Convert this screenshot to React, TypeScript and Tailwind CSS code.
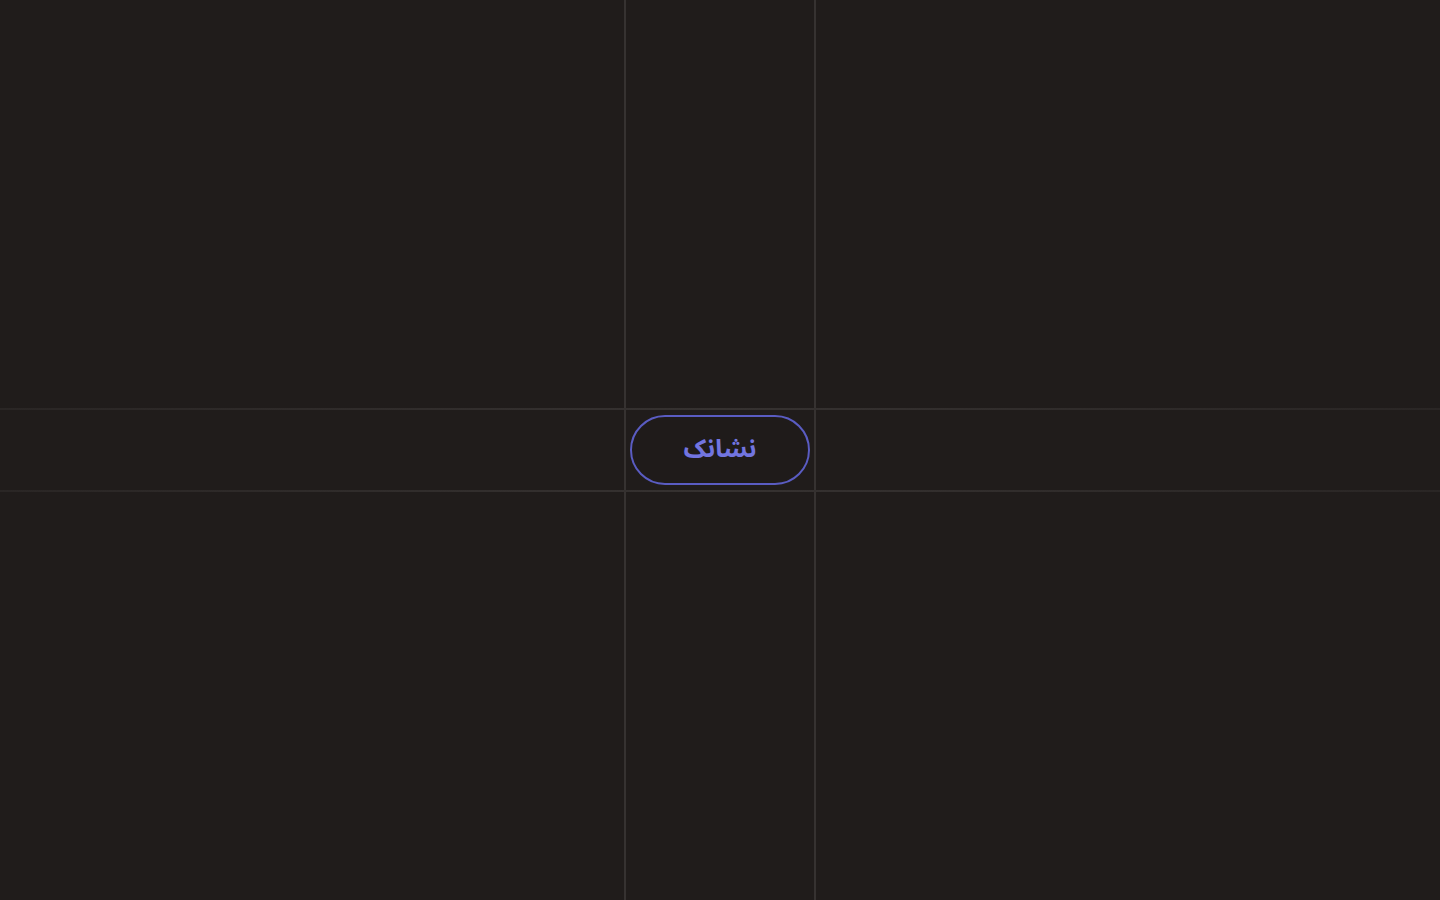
export default function App() {
  return (
    <div className="grid h-[900px] w-full grid-cols-[1fr_2px_auto_2px_1fr] grid-rows-[1fr_2px_auto_2px_1fr] bg-[#201c1b]">
      {/* vertical guide lines */}
      <div className="col-start-2 row-span-5 row-start-1 bg-[#363231]" />
      <div className="col-start-4 row-span-5 row-start-1 bg-[#363231]" />

      {/* horizontal guide lines */}
      <div className="col-span-5 col-start-1 row-start-2 bg-gradient-to-r from-[#2a2625] via-[#363231] to-[#2a2625]" />
      <div className="col-span-5 col-start-1 row-start-4 bg-gradient-to-r from-[#2a2625] via-[#363231] to-[#2a2625]" />

      {/* centre cell */}
      <div className="col-start-3 row-start-3 px-[4px] py-[5px]">
        <button
          dir="rtl"
          className="flex h-[70px] w-[180px] items-center justify-center rounded-full border-[2.5px] border-[#5a5cc2] bg-[#1f1b1a] text-[25px] font-bold text-[#7275e0]"
          style={{ fontFamily: '"Noto Sans Arabic", "DejaVu Sans", "Noto Sans", sans-serif' }}
        >
          نشانک
        </button>
      </div>
    </div>
  );
}
